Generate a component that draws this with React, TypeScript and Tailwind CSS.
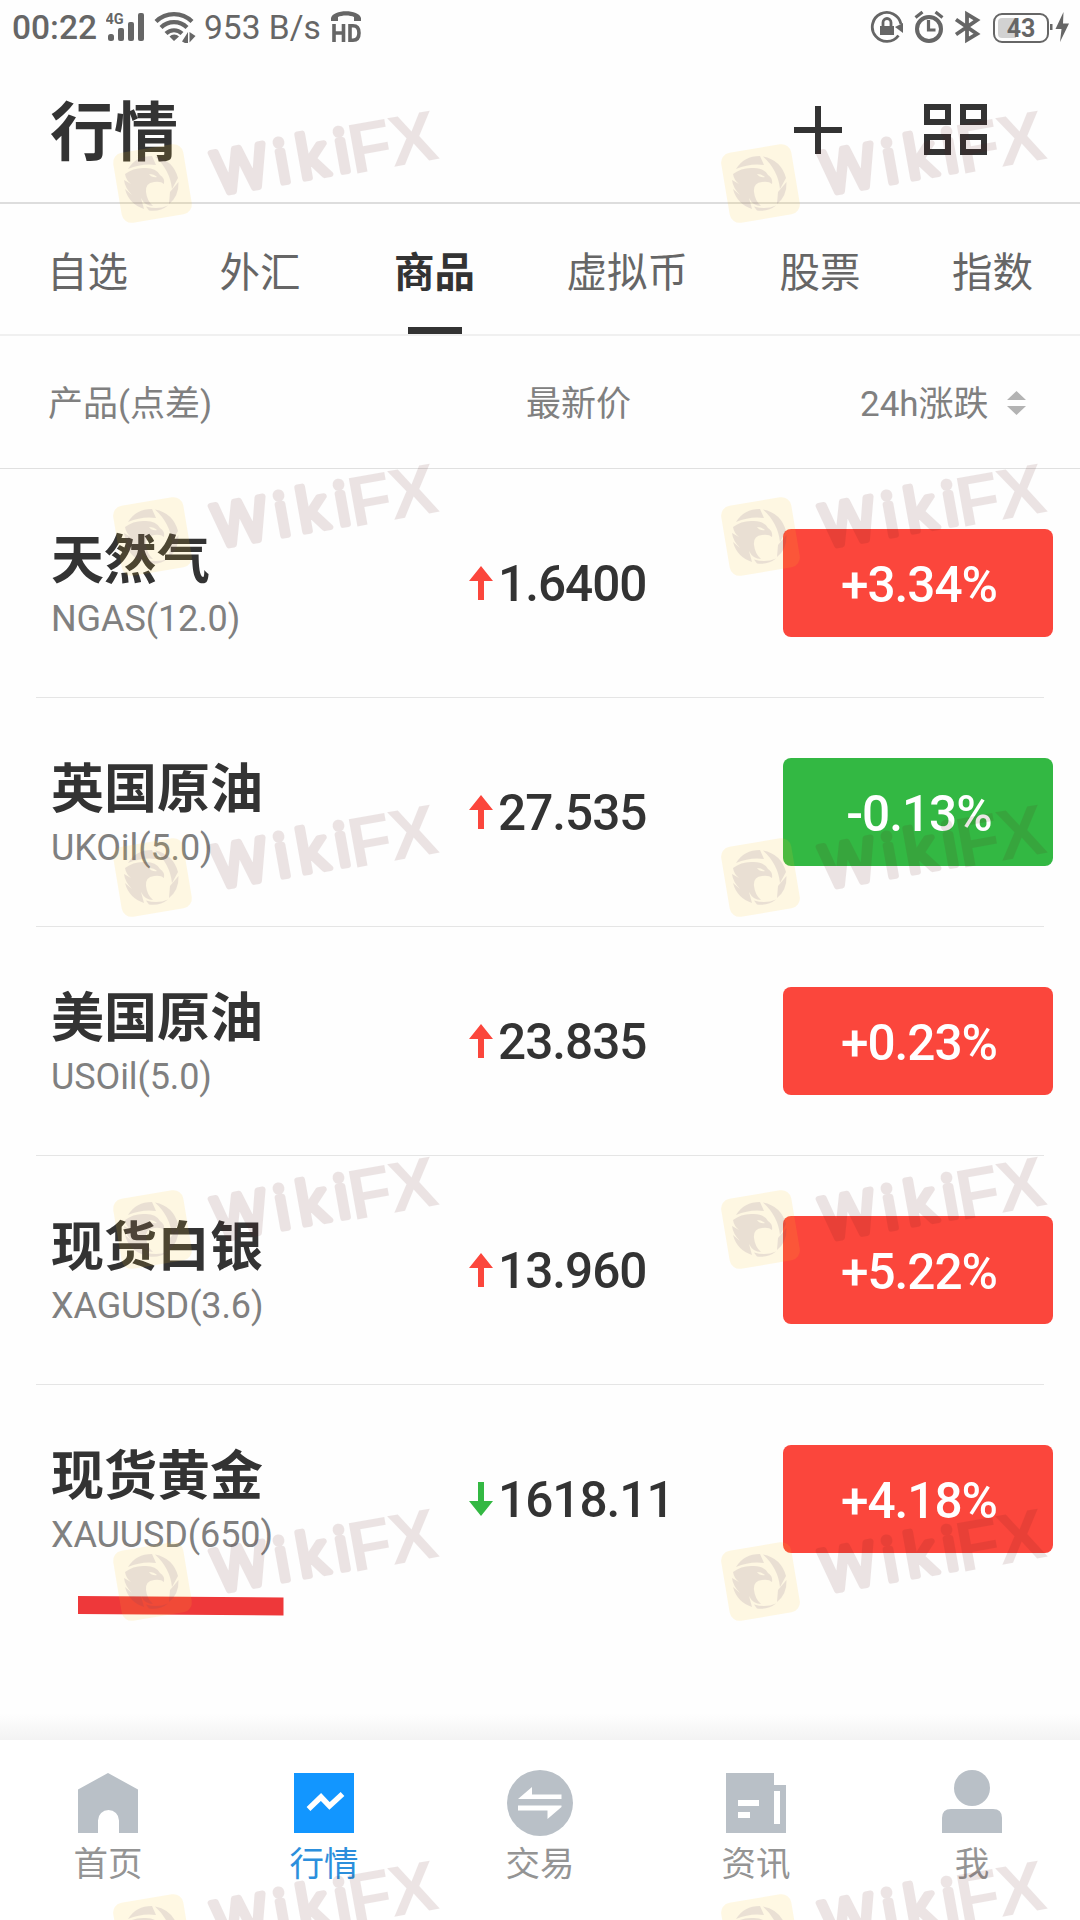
import clsx from "clsx";

const tabs = ["自选", "外汇", "商品", "虚拟币", "股票", "指数"];

const quotes = [
	{ name: "天然气", code: "NGAS(12.0)", price: "1.6400", up: true, change: "+3.34%" },
	{ name: "英国原油", code: "UKOil(5.0)", price: "27.535", up: true, change: "-0.13%" },
	{ name: "美国原油", code: "USOil(5.0)", price: "23.835", up: true, change: "+0.23%" },
	{ name: "现货白银", code: "XAGUSD(3.6)", price: "13.960", up: true, change: "+5.22%" },
	{ name: "现货黄金", code: "XAUUSD(650)", price: "1618.11", up: false, change: "+4.18%" },
];

const watermarkRows = [143, 496, 837, 1189, 1541, 1893];

function StatusBar() {
	return (
		<div className="flex h-14 items-start justify-between pt-[8px] text-[#666]">
			<div className="flex h-[40px] items-center pl-[12px]">
				<span className="w-[94px] text-[33.5px] leading-[40px] font-medium">00:22</span>
				<svg width="40" height="40" viewBox="106 8 40 40" fill="currentColor">
					<text x="105.500" y="24" fontSize="14.500" fontWeight="700">4G</text>
					<rect x="108" y="34" width="6" height="7" rx="2.500" />
					<rect x="118" y="28" width="6" height="13" rx="2" />
					<rect x="128" y="22" width="6" height="19" rx="2" />
					<rect x="138" y="13" width="6" height="28" rx="2" />
				</svg>
				<svg className="ml-[8px]" width="42" height="40" viewBox="154 8 42 40" fill="none">
					<g stroke="currentColor" strokeWidth="4.200">
						<path d="M156 21.500a25.500 25.500 0 0 1 36 0" />
						<path d="M161 27.500a18.500 18.500 0 0 1 26 0" />
						<path d="M166 33.500a11.500 11.500 0 0 1 16 0" />
					</g>
					<path
						d="M169.500 36.500a6.500 6.500 0 0 1 9.500 0l-5 4.500zM182 41.500l6-9.500v11h-3zM189.500 32l6 4-6 6.500z"
						fill="currentColor"
					/>
				</svg>
				<span className="ml-[8px] w-[126px] text-[33.5px] leading-[38px] whitespace-nowrap">953 B/s</span>
				<svg width="32" height="40" viewBox="330 8 32 40" fill="currentColor">
					<path d="M331 21v-3c2-9 28-9 30 0v3h-7v-4c-4-2-12-2-16 0v4z" />
					<path
						d="M334 24v18M343.500 24v18M334 33h9.500M350 25.800h3q6 0 6 7.200t-6 7.200h-3z"
						stroke="currentColor"
						strokeWidth="3.600"
						fill="none"
					/>
				</svg>
			</div>
			<div className="flex h-[40px] items-center pr-[10px]">
				<svg width="34" height="40" viewBox="870 8 34 40" fill="none" stroke="currentColor" strokeWidth="2.800">
					<path d="M898.500 35.500A14.500 14.500 0 1 1 901 24" />
					<path d="M895 27l8-4v10z" fill="currentColor" stroke="none" />
					<rect x="880" y="26" width="14" height="9" fill="currentColor" stroke="none" />
					<path d="M883 26v-3.500a4 4 0 0 1 8 0V26" />
				</svg>
				<svg className="ml-[10px]" width="32" height="40" viewBox="914 8 32 40" fill="none" stroke="currentColor">
					<circle cx="929" cy="29" r="12" strokeWidth="4" />
					<path d="M928.500 20v10h7" strokeWidth="3.200" />
					<path d="M915.500 17.500l7-5.500M942.500 17.500l-7-5.500" strokeWidth="3.200" />
				</svg>
				<svg className="ml-[8px]" width="28" height="40" viewBox="954 8 28 40" fill="none" stroke="currentColor" strokeWidth="3.800">
					<path d="M956 19.500l21 14.500-10 6V14l10 6-21 14.500" />
				</svg>
				<div className="ml-[11px] flex h-[30px] w-[56px] items-center rounded-[9px] border-2 border-[#666] bg-linear-to-r from-[#d2d2d2] from-40% to-white to-40% bg-clip-content p-[3px]">
					<span className="w-full text-center text-[25px] leading-none font-bold">43</span>
				</div>
				<svg className="ml-[1px]" width="20" height="40" viewBox="1050 8 20 40" fill="currentColor">
					<rect x="1050" y="24" width="2.500" height="6" />
					<path d="M1063.500 12l-8 17h6l-1.500 13 9-18.500h-6z" />
				</svg>
			</div>
		</div>
	);
}

function Header() {
	return (
		<header className="flex h-[148px] items-center justify-between border-b-2 border-[#dddddd] pr-[93px] pl-[50px] text-[#333]">
			<h1 className="pt-[10px] text-[64px] leading-[80px] font-bold">行情</h1>
			<div className="flex items-center gap-[82px] pt-[1px]">
				<svg width="48" height="48" viewBox="0 0 48 48" stroke="currentColor" strokeWidth="6">
					<path d="M24 0v48M0 24h48" />
				</svg>
				<svg width="63" height="51" viewBox="0 0 63 51" fill="none" stroke="currentColor" strokeWidth="6">
					<path d="M3 3h21v15H3zM39 3h21v15H39zM3 33h21v15H3zM39 33h21v15H39z" />
				</svg>
			</div>
		</header>
	);
}

function Tabs() {
	return (
		<nav className="flex h-[132px] justify-between border-b-2 border-[#f0f0f0] px-[47px] text-[40.5px] text-[#666]">
			{tabs.map((tab) => {
				const active = tab === "商品";
				return (
					<div
						key={tab}
						className={clsx("flex flex-col items-center justify-between pt-[39px]", active && "pl-[2px] font-bold text-[#333]")}
					>
						<span className="leading-[60px]">{tab}</span>
						{active && <div className="h-[7px] w-[54px] bg-[#333]" />}
					</div>
				);
			})}
		</nav>
	);
}

function TableHead() {
	return (
		<div className="flex h-[133px] items-center border-b border-[#e0e0e0] pl-[48px] text-[35px] text-[#808080]">
			<span className="w-[478px] pt-[7px]">产品(点差)</span>
			<span className="w-[334px] pt-[7px]">最新价</span>
			<span className="pt-[7px]">24h涨跌</span>
			<svg className="mt-[1px] ml-[18px]" width="19" height="24" viewBox="0 0 19 24" fill="#b3b3b3">
				<path d="M9.500 0l9.500 9H0zM0 15h19l-9.500 9z" />
			</svg>
		</div>
	);
}

function Arrow({ up }: { up: boolean }) {
	return (
		<svg
			className={clsx("mr-[5px]", up ? "text-[#fb463c]" : "rotate-180 text-[#33b843]")}
			width="24"
			height="34"
			viewBox="0 0 24 34"
			fill="currentColor"
		>
			<path d="M12 0l12 15H15v19H9V15H0z" />
		</svg>
	);
}

function QuoteRow({ quote, last }: { quote: (typeof quotes)[number]; last: boolean }) {
	return (
		<div className={clsx("mx-[36px] flex h-[229px] items-center border-b", last ? "border-transparent" : "border-[#e5e5e5]")}>
			<div className="w-[433px] shrink-0 pt-[10px] pl-[15px]">
				<p className="text-[53px] leading-[62px] font-bold text-[#333]">{quote.name}</p>
				<p className="text-[36px] leading-[54px] tracking-[-0.1px] text-[#808080]">{quote.code}</p>
			</div>
			<div className="flex w-[314px] shrink-0 items-center">
				<Arrow up={quote.up} />
				<span className="pt-[1px] text-[49.5px] leading-[60px] font-medium tracking-[-1px] text-[#333]">{quote.price}</span>
			</div>
			<div
				className={clsx(
					"flex h-[108px] w-[270px] shrink-0 items-center justify-center rounded-lg pt-[4px] pl-[2px] text-[49.5px] font-medium tracking-[-1px] text-white",
					quote.change.startsWith("-") ? "bg-[#33b843]" : "bg-[#fb463c]"
				)}
			>
				{quote.change}
			</div>
		</div>
	);
}

const navItems = [
	{
		label: "首页",
		icon: <path d="M3 20.500L33 4l30 16.500V64H44V51.500a10.500 10.500 0 0 0-21 0V64H3z" />,
	},
	{
		label: "行情",
		icon: (
			<>
				<path d="M3 4h60v60H3z" />
				<path d="M17.500 40L30 28l8.500 9L51.500 25" fill="none" stroke="#fff" strokeWidth="5.500" />
			</>
		),
	},
	{
		label: "交易",
		icon: (
			<>
				<circle cx="33" cy="34" r="33" />
				<path d="M11 30L25 18v7.500h29.500V30zM11 36.500h43.500v1.500L40.500 50v-8.500H11z" fill="#fff" />
			</>
		),
	},
	{
		label: "资讯",
		icon: <path fillRule="evenodd" d="M3 4h48v12h12v48H3zM51 22v33h6V22zM15 31v6h21v-6zM15 43v6h12v-6z" />,
	},
	{
		label: "我",
		icon: (
			<>
				<circle cx="33" cy="19" r="18" />
				<path d="M3 64V49q0-9 9-9h42q9 0 9 9v15z" />
			</>
		),
	},
];

function BottomNav() {
	return (
		<nav className="grid h-[180px] grid-cols-5 bg-white">
			{navItems.map((item) => (
				<div
					key={item.label}
					className={clsx("flex flex-col items-center pt-[29px]", item.label === "行情" ? "text-[#1296ff]" : "text-[#b9c0c7]")}
				>
					<svg width="66" height="68" viewBox="0 0 66 68" fill="currentColor">
						{item.icon}
					</svg>
					<span className={clsx("text-[34.5px] leading-[54px]", item.label === "行情" ? "text-[#2c8fdc]" : "text-[#949494]")}>
						{item.label}
					</span>
				</div>
			))}
		</nav>
	);
}

function Watermark({ x, y }: { x: number; y: number }) {
	return (
		<g transform={`translate(${x} ${y})`}>
			<rect x="5" y="5" width="71" height="71" rx="10" fill="#ffc828" opacity="0.130" transform="rotate(-9.500 40.500 40.500)" />
			{/* shutter blades round the eagle */}
			<g fill="#5a3c6e" opacity="0.120">
				<path d="M16 26Q24 13 40 13l4 9Q30 20 16 26z" />
				<path d="M43 13.500Q61 17 66 35l-6 11Q58 27 43 13.500z" />
				<path d="M66.500 39Q67 53 57 61l1-12z" />
				<path d="M56 62.500Q48 69 37 67.500l-3-4Q46 67 56 62.500z" />
				<path d="M13 31Q22 24 34 25q10 0 14 7 5 3 4 9-3-3-10-2-9 1-8 10 1 9 7 14-8 0-12-8l3 11Q17 61 13 46l7 6Q13 45 12 37l7 4Q14 37 13 31zM37 31q3 4 8 3-3-3-8-3z" fillRule="evenodd" />
			</g>
			<g transform="translate(97 57) rotate(-10.200)" fill="#581616" stroke="#581616" opacity="0.110" strokeLinejoin="round">
				<text x="9" y="-4" fontFamily="Open Sans, sans-serif" fontSize="59" fontWeight="400" strokeWidth="6" textLength="138" lengthAdjust="spacing">
					Wiki
				</text>
				<text x="146" y="0" fontFamily="Liberation Sans, sans-serif" fontSize="71" fontWeight="700" strokeWidth="0" textLength="89">
					FX
				</text>
			</g>
		</g>
	);
}

export default function App() {
	return (
		<div className="relative flex h-[1920px] w-[1080px] flex-col overflow-hidden bg-[#fefefe] font-['Roboto','Noto_Sans_CJK_SC',sans-serif]">
			<StatusBar />
			<Header />
			<Tabs />
			<TableHead />
			<main className="flex-1">
				{quotes.map((quote, i) => (
					<QuoteRow key={quote.code} quote={quote} last={i === quotes.length - 1} />
				))}
			</main>
			<div className="h-[26px] bg-linear-to-b from-[#fefefe] to-[#f3f3f3]" />
			<BottomNav />
			{/* hand-drawn underline below the gold row */}
			<svg className="absolute top-[1596px] left-[78px]" width="206" height="20" viewBox="0 0 206 20" fill="#ee383a">
				<path d="M0 0l205.500 1.500v18L0 18z" />
			</svg>
			<svg className="pointer-events-none absolute inset-0" width="1080" height="1920" viewBox="0 0 1080 1920">
				{watermarkRows.map((y) => (
					<g key={y}>
						<Watermark x={112} y={y} />
						<Watermark x={720} y={y} />
					</g>
				))}
			</svg>
		</div>
	);
}
